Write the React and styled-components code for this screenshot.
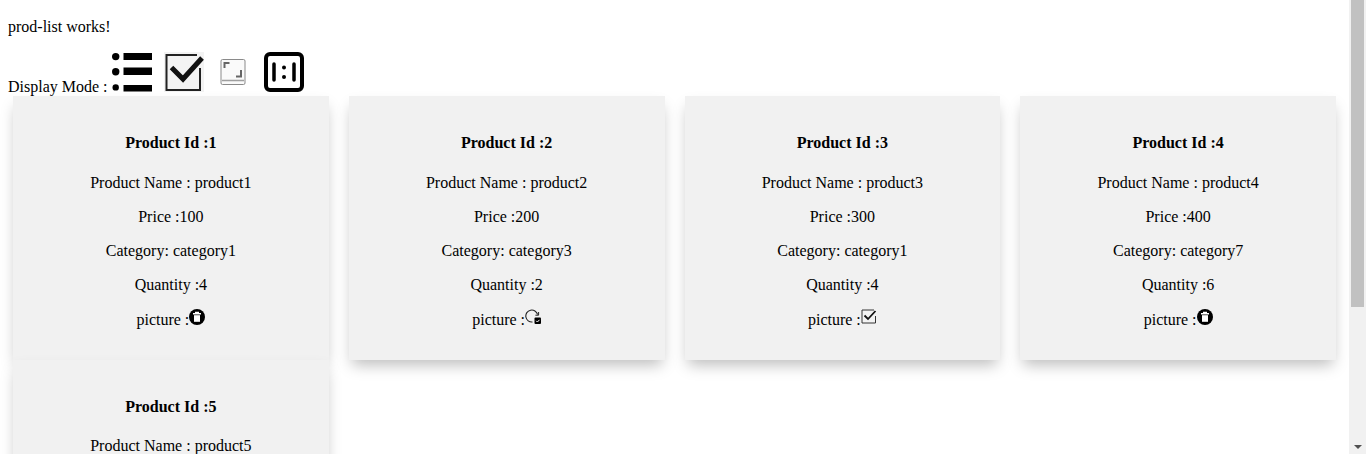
import React from 'react'
import styled, { createGlobalStyle } from 'styled-components'

const GlobalStyle = createGlobalStyle`
    html, body {
        margin: 0;
        height: 100%;
        overflow: hidden;
        background: #fff;
    }

    body {
        font-family: "Liberation Serif", "Times New Roman", serif;
        font-size: 16px;
        color: #000;
    }
`

const Shell = styled.div`
    display: flex;
    height: 100vh;
`

const Page = styled.main`
    flex: 1;
    min-width: 0;
    padding: 0 8px;
    overflow: hidden;
`

const Scrollbar = styled.aside`
    flex: 0 0 17px;
    display: flex;
    flex-direction: column;
    justify-content: space-between;
    background: #f1f1f1;
`

const Thumb = styled.div`
    height: 307px;
    margin: 0 2px;
    background: #c1c1c1;
`

const ArrowDown = styled.div`
    align-self: center;
    margin-bottom: 5px;
    border-left: 4px solid transparent;
    border-right: 4px solid transparent;
    border-top: 4px solid #505050;
`

const Works = styled.p`
    margin: 18px 0 14px;
`

const ModeBar = styled.div`
    height: 46px;
    padding-top: 2px;
    box-sizing: border-box;
`

const ModeIcon = styled.svg`
    width: ${(props) => props.size || 40}px;
    height: 40px;
    margin-left: ${(props) => props.gap || 0}px;
    vertical-align: baseline;
`

const Row = styled.div`
    display: grid;
    grid-template-columns: repeat(4, 1fr);
    margin: 0 -5px;
`

const Card = styled.article`
    margin: 0 10px;
    padding: 17px 16px 16px;
    background: #f1f1f1;
    box-shadow: 0 8px 14px -3px rgba(0, 0, 0, 0.26);
    text-align: center;
`

const CardTitle = styled.h4`
    margin: 21.28px 0;
    font-size: 16px;
    font-weight: bold;
`

const Field = styled.p`
    margin: 16px 0;
`

const PictureField = styled(Field)`
    height: 18px;
    margin-top: -1px;
    margin-bottom: 17px;
`

const PictureIcon = styled.svg`
    width: 16px;
    height: 16px;
    vertical-align: baseline;
`

const ListIcon = () => (
    <ModeIcon viewBox="0 0 40 40">
        <circle cx="3.7" cy="4.6" r="3.7" />
        <circle cx="3.7" cy="19.7" r="3.7" />
        <circle cx="3.7" cy="35.4" r="3.2" />
        <rect x="11.5" y="1" width="28.5" height="7" />
        <rect x="11.5" y="15.5" width="28.5" height="7.5" />
        <rect x="11.5" y="33" width="28.5" height="6.5" />
    </ModeIcon>
)

const CheckIcon = () => (
    <ModeIcon viewBox="0 0 40 40" gap={12}>
        <rect width="40" height="40" fill="#f3f3f3" />
        <path d="M33 3H2.5V38H36V16" fill="none" stroke="#222" strokeWidth="2" />
        <path d="M7.5 15.5L19 27L38 6" fill="none" stroke="#111" strokeWidth="5" />
    </ModeIcon>
)

const ActualIcon = () => (
    <ModeIcon viewBox="0 0 26 40" size={26} gap={16}>
        <rect x="1" y="7.5" width="24" height="25" rx="1.5" fill="#fafafa" stroke="#8a8a8a" />
        <path d="M4.5 16V11H9.5" fill="none" stroke="#666" strokeWidth="2" />
        <path d="M21 18V24.5H16" fill="none" stroke="#666" strokeWidth="2" />
        <path d="M2.5 28.5H23.5" stroke="#444" strokeWidth="1.5" strokeDasharray="1 1" />
    </ModeIcon>
)

const RatioIcon = () => (
    <ModeIcon viewBox="0 0 40 40" gap={18}>
        <rect x="2" y="2" width="36" height="36" rx="4" fill="none" stroke="#000" strokeWidth="4" />
        <path d="M10 12V28M30 12V28" stroke="#000" strokeWidth="3.5" strokeLinecap="round" />
        <circle cx="20" cy="15.5" r="2" />
        <circle cx="20" cy="25" r="2" />
    </ModeIcon>
)

const TrashPicture = () => (
    <PictureIcon viewBox="0 0 16 16">
        <circle cx="8" cy="8" r="8" />
        <path d="M6 2.8H10V4H12V5.4H4V4H6Z" fill="#fff" />
        <path d="M5 6.2H11V12.8H5Z" fill="#fff" />
    </PictureIcon>
)

const LoadPicture = () => (
    <PictureIcon viewBox="0 0 16 16">
        <path d="M12.6 5.5A6 6 0 1 0 7.5 13" fill="none" stroke="#222" strokeWidth="1.1" />
        <path d="M13.6 3V6.2H10.4" fill="none" stroke="#222" />
        <rect x="9.5" y="8.5" width="6.5" height="6.5" rx="1" />
        <path d="M11.2 11.8L12.4 13L14.5 10.8" fill="none" stroke="#fff" />
    </PictureIcon>
)

const TickPicture = () => (
    <PictureIcon viewBox="0 0 16 16">
        <rect width="16" height="15" fill="#f3f3f3" />
        <path d="M13 1H1V14H14.5V7" fill="none" stroke="#333" />
        <path d="M3.5 6.5L7 10L14.5 2" fill="none" stroke="#111" strokeWidth="1.8" />
    </PictureIcon>
)

const pictures = {
    trash: TrashPicture,
    load: LoadPicture,
    tick: TickPicture,
}

const products = [
    { id: 1, name: 'product1', price: 100, category: 'category1', quantity: 4, picture: 'trash' },
    { id: 2, name: 'product2', price: 200, category: 'category3', quantity: 2, picture: 'load' },
    { id: 3, name: 'product3', price: 300, category: 'category1', quantity: 4, picture: 'tick' },
    { id: 4, name: 'product4', price: 400, category: 'category7', quantity: 6, picture: 'trash' },
    { id: 5, name: 'product5', price: 500, category: 'category2', quantity: 1, picture: 'load' },
]

const App = () => (
    <Shell>
        <GlobalStyle />
        <Page>
            <Works>prod-list works!</Works>
            <ModeBar>
                Display Mode : <ListIcon />
                <CheckIcon />
                <ActualIcon />
                <RatioIcon />
            </ModeBar>
            <Row>
                {products.map((product) => {
                    const Picture = pictures[product.picture]
                    return (
                        <Card key={product.id}>
                            <CardTitle>Product Id :{product.id}</CardTitle>
                            <Field>Product Name : {product.name}</Field>
                            <Field>Price :{product.price}</Field>
                            <Field>Category: {product.category}</Field>
                            <Field>Quantity :{product.quantity}</Field>
                            <PictureField>
                                picture :<Picture />
                            </PictureField>
                        </Card>
                    )
                })}
            </Row>
        </Page>
        <Scrollbar>
            <Thumb />
            <ArrowDown />
        </Scrollbar>
    </Shell>
)

export default App
